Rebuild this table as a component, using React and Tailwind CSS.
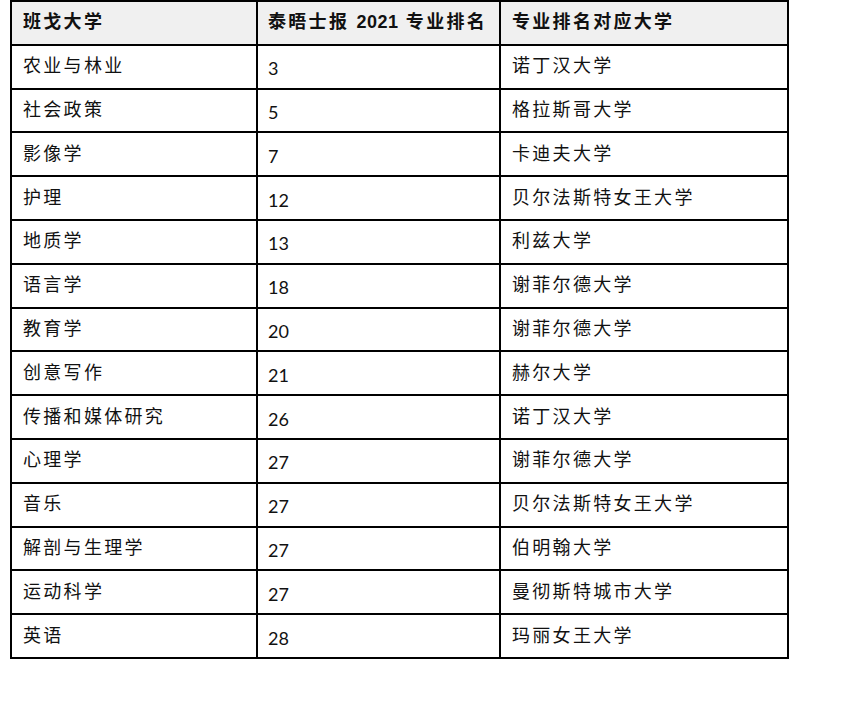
const rows = [
  ["农业与林业", "3", "诺丁汉大学"],
  ["社会政策", "5", "格拉斯哥大学"],
  ["影像学", "7", "卡迪夫大学"],
  ["护理", "12", "贝尔法斯特女王大学"],
  ["地质学", "13", "利兹大学"],
  ["语言学", "18", "谢菲尔德大学"],
  ["教育学", "20", "谢菲尔德大学"],
  ["创意写作", "21", "赫尔大学"],
  ["传播和媒体研究", "26", "诺丁汉大学"],
  ["心理学", "27", "谢菲尔德大学"],
  ["音乐", "27", "贝尔法斯特女王大学"],
  ["解剖与生理学", "27", "伯明翰大学"],
  ["运动科学", "27", "曼彻斯特城市大学"],
  ["英语", "28", "玛丽女王大学"],
];

const cjk = "font-['Liberation_Sans','Noto_Sans_CJK_SC',sans-serif]";

export default function App() {
  return (
    <div className="min-h-[703px] bg-white pl-[10px]">
      <table className={`border-collapse ${cjk} text-[18px] text-[#111] tracking-[2.3px]`}>
        <thead>
          <tr className="h-[43.8px] bg-[#f0f0f0]">
            <th className="w-[246px] border-2 border-black px-[11px] text-left font-bold">班戈大学</th>
            <th className="w-[243px] border-2 border-black px-[10px] text-left font-bold">
              泰晤士报 <span className="tracking-[0.5px]">2021</span> 专业排名
            </th>
            <th className="w-[288px] border-2 border-black px-[11px] text-left font-bold">专业排名对应大学</th>
          </tr>
        </thead>
        <tbody>
          {rows.map((r, i) => (
            <tr key={i} className="h-[43.8px]">
              <td className="border-2 border-black px-[11px]">{r[0]}</td>
              <td className="border-2 border-black px-[10px] pt-[4px] font-['Lato',sans-serif] tracking-normal">{r[1]}</td>
              <td className="border-2 border-black px-[11px]">{r[2]}</td>
            </tr>
          ))}
        </tbody>
      </table>
    </div>
  );
}
